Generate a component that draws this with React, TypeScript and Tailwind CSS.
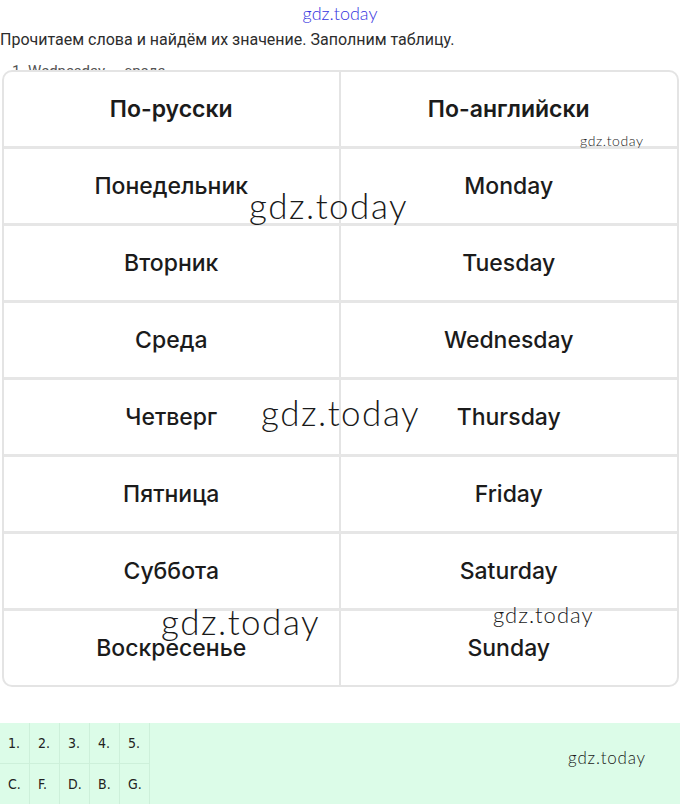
import React from "react";

const rows: [string, string][] = [
  ["Понедельник", "Monday"],
  ["Вторник", "Tuesday"],
  ["Среда", "Wednesday"],
  ["Четверг", "Thursday"],
  ["Пятница", "Friday"],
  ["Суббота", "Saturday"],
  ["Воскресенье", "Sunday"],
];

const wm = "font-['Lato','DejaVu_Sans',sans-serif] font-light text-[#1a1a1a] absolute whitespace-nowrap leading-none pointer-events-none";

export default function App() {
  return (
    <div className="w-[680px] h-[804px] bg-white overflow-hidden relative font-['Inter','Noto_Sans',sans-serif]">
      <div className="h-[26px] flex items-center justify-center">
        <span className="font-['Lato',sans-serif] font-light text-[18px] text-[#3535e0] leading-none">gdz.today</span>
      </div>
      <p className="font-['Roboto',sans-serif] text-[16px] text-[#2d2d2d] leading-[28px]">
        Прочитаем слова и найдём их значение. Заполним таблицу.
      </p>
      <div className="h-[8px] overflow-hidden mt-[8px]">
        <p className="font-['Roboto',sans-serif] text-[15px] text-[#555] leading-[18px] pl-[12px]">1. Wednesday — среда</p>
      </div>
      <div className="ml-[2px] mr-[1px] border-2 border-[#e4e4e4] rounded-[10px] overflow-hidden bg-white">
        <div className="grid grid-cols-2 h-[74px]">
          <div className="flex items-center justify-center border-r-2 border-[#e4e4e4] text-[23px] font-semibold text-[#1b1b1b]">По-русски</div>
          <div className="flex items-center justify-center text-[23px] font-semibold text-[#1b1b1b]">По-английски</div>
        </div>
        {rows.map(([ru, en]) => (
          <div key={ru} className="grid grid-cols-2 h-[77px] border-t-[3px] border-[#e6e6e6]">
            <div className="flex items-center justify-center border-r-2 border-[#e4e4e4] text-[23px] font-medium text-[#1b1b1b]">{ru}</div>
            <div className="flex items-center justify-center text-[23px] font-medium text-[#1b1b1b]">{en}</div>
          </div>
        ))}
      </div>
      <div className="mt-[36px] h-[82px] bg-[#dcfce8] flex">
        <div className="grid grid-cols-5 grid-rows-2 font-['Liberation_Sans_Narrow','DejaVu_Sans_Condensed',sans-serif] text-[14px] text-[#222]">
          {["1.", "2.", "3.", "4.", "5.", "C.", "F.", "D.", "B.", "G."].map((t, i) => (
            <div key={i} className="w-[30px] h-[41px] flex items-center pl-[8px] border-r border-b border-[#cdf0da]">{t}</div>
          ))}
        </div>
      </div>
      <span className={wm + " text-[14px] tracking-[0.6px] left-[580px] top-[134px]"}>gdz.today</span>
      <span className={wm + " text-[35px] tracking-[1.5px] left-[249px] top-[188px]"}>gdz.today</span>
      <span className={wm + " text-[35px] tracking-[1.5px] left-[261px] top-[395px]"}>gdz.today</span>
      <span className={wm + " text-[35px] tracking-[1.5px] left-[161px] top-[604px]"}>gdz.today</span>
      <span className={wm + " text-[22px] tracking-[1px] left-[493px] top-[604px]"}>gdz.today</span>
      <span className={wm + " text-[17px] tracking-[0.8px] left-[568px] top-[749px]"}>gdz.today</span>
    </div>
  );
}
